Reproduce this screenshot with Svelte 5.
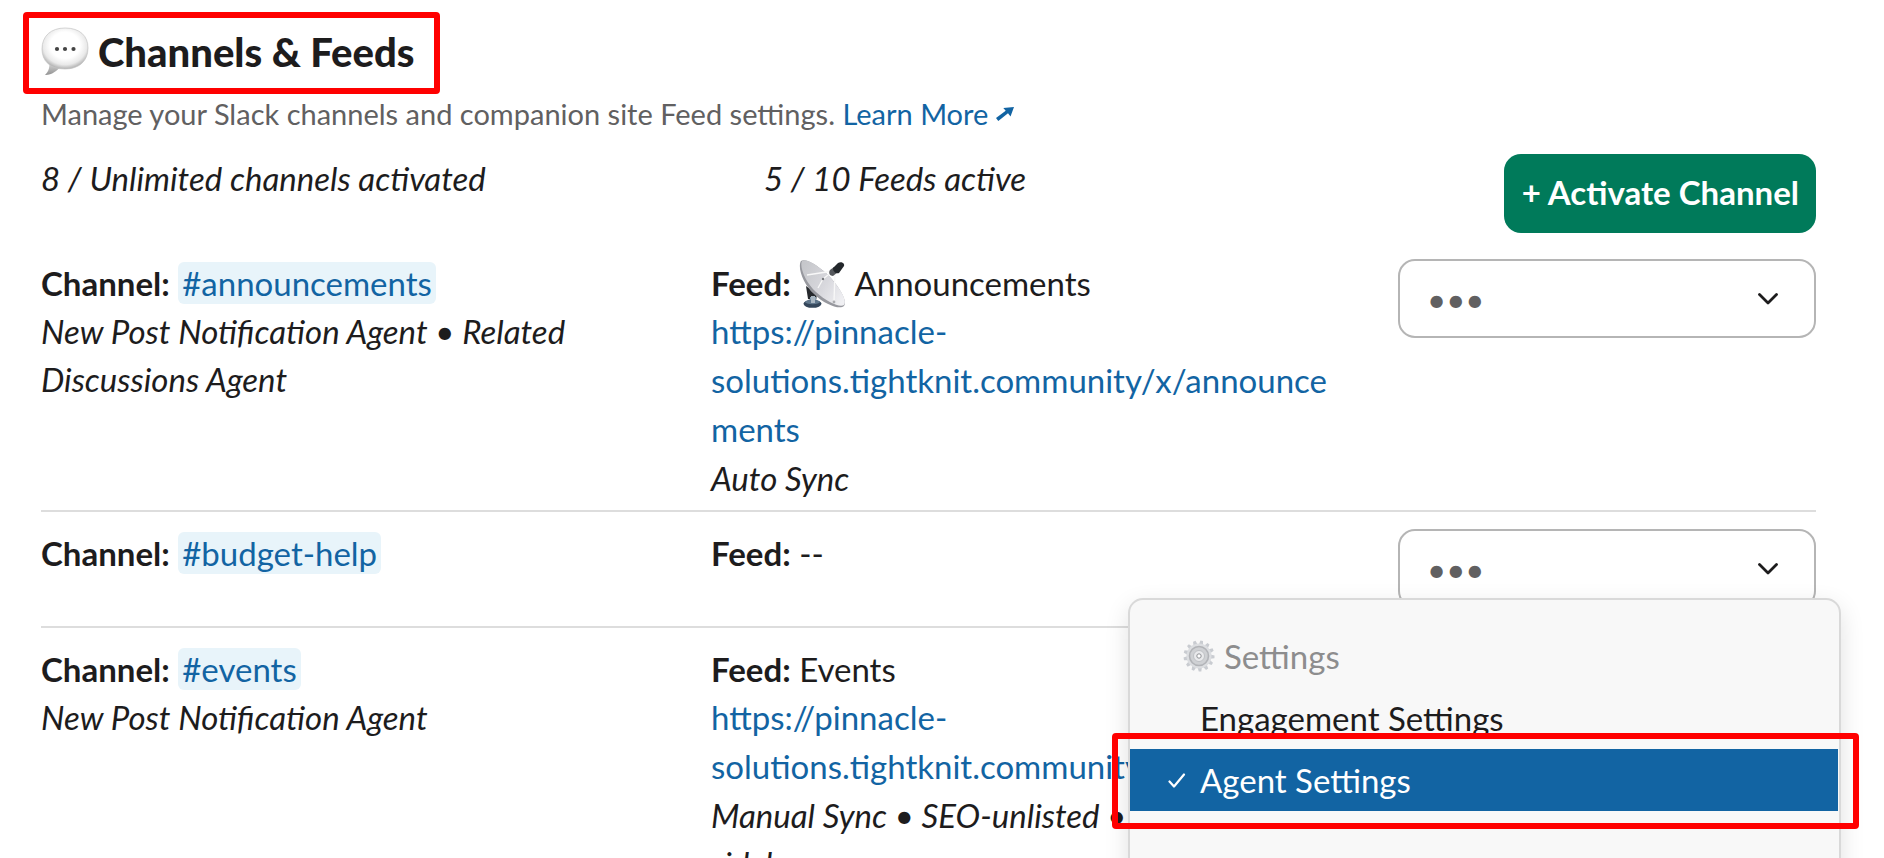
<script>
  const siteUrl = "https://pinnacle-solutions.tightknit.community";

  const channels = [
    {
      id: "announcements",
      agents: "New Post Notification Agent • Related Discussions Agent",
      feed: "Announcements",
      icon: true,
      url: `${siteUrl}/x/announcements`,
      sync: "Auto Sync",
    },
    { id: "budget-help", feed: "--" },
    {
      id: "events",
      agents: "New Post Notification Agent",
      feed: "Events",
      url: `${siteUrl}/events`,
      sync: "Manual Sync • SEO-unlisted •\nsidebar",
    },
  ];

  let openMenu = $state("budget-help");
  let selected = $state("Agent Settings");
  const menuItems = ["Engagement Settings", "Agent Settings"];

  function pick(item) {
    selected = item;
  }

  function handleKeydown(event) {
    if (event.key === "Escape") {
      openMenu = "";
    }
  }
</script>

<svelte:window onkeydown={handleKeydown} />

<main class="page">
  <h1 class="title">
    <svg class="title-icon" viewBox="0 0 48 50" aria-hidden="true">
      <defs>
        <radialGradient id="bubble" cx="50%" cy="42%" r="58%">
          <stop offset="0.55" stop-color="#fff" />
          <stop offset="0.82" stop-color="#e9e9e9" />
          <stop offset="1" stop-color="#b2b2b2" />
        </radialGradient>
        <linearGradient id="tail" x1="0" y1="0" x2="0" y2="1">
          <stop offset="0" stop-color="#e2e2e2" />
          <stop offset="1" stop-color="#929292" />
        </linearGradient>
      </defs>
      <path
        d="M8 34 C9 40 8 44 4 48 C10 48.500 16 44 20 39 L22 34 Z"
        fill="url(#tail)"
      />
      <path
        d="M24 1 C39 1 47 9 47 21 C47 34 38 42 24 42 C9 42 1 34 1 22 C1 9 10 1 24 1 Z"
        fill="url(#bubble)"
        stroke="#c4c4c4"
        stroke-width="0.7"
      />
      <circle cx="16" cy="22" r="2.100" fill="#444" />
      <circle cx="24" cy="22" r="2.100" fill="#444" />
      <circle cx="32.500" cy="22" r="2.100" fill="#444" />
    </svg>
    Channels &amp; Feeds
    <span class="callout callout-title"></span>
  </h1>

  <p class="subtitle">
    Manage your Slack channels and companion site Feed settings.
    <a href="#learn-more"
      >Learn More <svg class="arrow" viewBox="0 0 18 15" aria-hidden="true">
        <path
          d="M18 0 L14.500 9.500 L12 6.300 L2.300 14 L0 11 L9.700 3.700 L7.300 1 Z"
          fill="currentColor"
        />
      </svg></a
    >
  </p>

  <section class="row summary">
    <div class="fields">
      <em>8 / Unlimited channels activated</em>
      <em>5 / 10 Feeds active</em>
    </div>
    <button class="activate" type="button">+ Activate Channel</button>
  </section>

  {#each channels as channel (channel.id)}
    <section class="row channel">
      <div class="fields">
        <div>
          <div>
            <strong>Channel:</strong>
            <a class="pill" href="#{channel.id}">#{channel.id}</a>
          </div>
          {#if channel.agents}
            <em>{channel.agents}</em>
          {/if}
        </div>
        <div>
          <div>
            <strong>Feed:</strong>
            {#if channel.icon}
              <svg class="dish" viewBox="0 0 48 48" aria-hidden="true">
                <defs>
                  <linearGradient id="dish" x1="0" y1="0.2" x2="1" y2="0.8">
                    <stop offset="0" stop-color="#c6c7cb" />
                    <stop offset="0.55" stop-color="#d8d8dd" />
                    <stop offset="1" stop-color="#f0f0f3" />
                  </linearGradient>
                </defs>
                <path d="M7 26 L18 34 L17 41 L9 39 Z" fill="#25282c" />
                <path d="M11 37 H17 V44 H11 Z" fill="#8ba0b2" />
                <ellipse cx="13.500" cy="43.800" rx="9" ry="4" fill="#34465a" />
                <ellipse cx="13.500" cy="42" rx="7.500" ry="2.200" fill="#5f768b" />
                <path d="M12 36 H16 V43 H12 Z" fill="#a9b6c1" />
                <path
                  d="M2 1 C-2 8 5 25 15 34 C26 45 41 50 45 46 C49 41 40 26 28 14 C17 4 6 -2 2 1 Z"
                  fill="#97989e"
                />
                <path
                  d="M3 1 C0 7 7 23 17 32 C28 42 41 48 45 45 C49 40 39 25 28 14 C17 4 7 -2 3 1 Z"
                  fill="url(#dish)"
                />
                <path
                  d="M8 15 L34 11 M24 19 L34 11 M24 19 L19 28 M36 12 L35 42"
                  fill="none"
                  stroke="#f8f8f8"
                  stroke-width="1.300"
                />
                <circle cx="24" cy="19" r="1.200" fill="#77787c" />
                <circle cx="35" cy="42" r="1.400" fill="#aaabaf" />
                <path
                  d="M31 10 L35 7 L39 12 L34 16 C31 16 29 13 31 10 Z"
                  fill="#55585c"
                />
                <path
                  d="M34 8 L39 3 C42 1 46 3 45 6 L40 13 C37 14 34 12 34 8 Z"
                  fill="#23272b"
                />
              </svg>
            {/if}
            {channel.feed}
          </div>
          {#if channel.url}
            <a class="url" href={channel.url}>{channel.url}</a>
          {/if}
          {#if channel.sync}
            <em class="sync">{channel.sync}</em>
          {/if}
        </div>
      </div>

      <div class="actions">
        <select aria-label="Actions for #{channel.id}">
          <option>•••</option>
        </select>
        <svg class="chevron" viewBox="0 0 20 12" aria-hidden="true">
          <path
            d="M1.500 1.500 L10 10 L18.500 1.500"
            fill="none"
            stroke="currentColor"
            stroke-width="2.800"
            stroke-linecap="round"
            stroke-linejoin="round"
          />
        </svg>

        {#if openMenu === channel.id}
          <div class="menu" role="menu">
            <div class="menu-heading">
              <svg class="gear" viewBox="0 0 32 32" aria-hidden="true">
                {#each Array(13) as _, i}
                  <path
                    d="M13.800 5 L14.700 0.500 H17.300 L18.200 5 Z"
                    fill="#c9ccd1"
                    transform="rotate({(i * 360) / 13 + 10} 16 16)"
                  />
                {/each}
                <circle cx="16" cy="16" r="12.500" fill="#dcdee1" />
                <circle
                  cx="16"
                  cy="16"
                  r="9.500"
                  fill="#cfd1d4"
                  stroke="#b2b4b8"
                  stroke-width="1.600"
                />
                <circle cx="16" cy="16" r="5.500" fill="#e9eaec" stroke="#bfc1c5" />
                <circle cx="16" cy="16" r="2.200" fill="#fff" stroke="#8f9195" />
              </svg>
              Settings
            </div>
            {#each menuItems as item}
              <button
                class="menu-item"
                class:active={item === selected}
                type="button"
                role="menuitemradio"
                aria-checked={item === selected}
                onclick={() => pick(item)}
              >
                {#if item === selected}
                  <svg class="check" viewBox="0 0 18 16" aria-hidden="true">
                    <path
                      d="M1.500 8.500 L6 13.500 L16 1.500"
                      fill="none"
                      stroke="currentColor"
                      stroke-width="2.200"
                      stroke-linecap="round"
                      stroke-linejoin="round"
                    />
                  </svg>
                  <span class="callout"></span>
                {/if}
                {item}
              </button>
            {/each}
          </div>
        {/if}
      </div>
    </section>
  {/each}
</main>

<style>
  :global(body) {
    margin: 0;
    background: #fff;
  }

  .page {
    box-sizing: border-box;
    height: 100vh;
    overflow: hidden;
    padding: 28px 68px 0 41px;
    font-family: Lato, "Liberation Sans", sans-serif;
    font-size: 33px;
    line-height: 48px;
    color: #1d1c1d;
  }

  a {
    color: #1264a3;
    text-decoration: none;
  }

  a:hover {
    text-decoration: underline;
  }

  button,
  select {
    font: inherit;
    cursor: pointer;
  }

  .title {
    position: relative;
    display: flex;
    align-items: center;
    gap: 9px;
    width: fit-content;
    height: 48px;
    margin: 0;
    font-size: 40px;
    font-weight: 900;
  }

  .title-icon {
    width: 48px;
    height: 50px;
  }

  /* red highlight frame */
  .callout {
    position: absolute;
    inset: -16px -21px -18px -18px;
    border: 6px solid #f00;
    border-radius: 4px;
    pointer-events: none;
  }

  .callout-title {
    right: -25px;
  }

  .subtitle {
    margin: 20px 0 22px;
    font-size: 29px;
    line-height: 36px;
    color: #616061;
  }

  .arrow {
    width: 18px;
    height: 15px;
    vertical-align: 3px;
  }

  .row {
    display: flex;
    align-items: flex-start;
    gap: 52px;
  }

  .summary {
    margin-bottom: 9px;
  }

  .channel {
    padding: 17px 0 8px;
  }

  .channel + .channel {
    border-top: 2px solid #ddd;
  }

  .fields {
    flex: 1;
    min-width: 0;
    display: grid;
    grid-template-columns: 1fr 1fr;
    gap: 35px;
  }

  .fields > * {
    min-width: 0;
  }

  .activate {
    height: 79px;
    padding: 0 17px 3px 18px;
    border: none;
    border-radius: 17px;
    background: #007a5a;
    color: #fff;
    font-weight: 700;
  }

  .activate:hover {
    background: #148567;
  }

  .pill {
    padding: 1px 4px;
    border-radius: 6px;
    background: #e8f4fa;
  }

  .dish {
    width: 48px;
    height: 48px;
    margin: -8px 0;
    vertical-align: -4px;
  }

  .url {
    display: block;
    line-height: 49px;
    overflow-wrap: anywhere;
  }

  .sync {
    white-space: pre-line;
  }

  .actions {
    position: relative;
    width: 418px;
    margin-bottom: 10px;
  }

  select {
    display: block;
    width: 100%;
    height: 79px;
    padding: 0 27px;
    border: 2px solid #b5b5b5;
    border-radius: 17px;
    background: #fff;
    color: #616061;
    appearance: none;
  }

  .chevron {
    position: absolute;
    top: 34px;
    right: 38px;
    width: 20px;
    height: 12px;
    pointer-events: none;
  }

  .menu {
    position: absolute;
    z-index: 10;
    top: 69px;
    right: -25px;
    box-sizing: border-box;
    width: 713px;
    height: 600px;
    padding: 25px 1px 0 0;
    border: 2px solid #d9d9d9;
    border-radius: 15px;
    background: #f8f8f8;
    box-shadow: 0 8px 24px rgba(0, 0, 0, 0.12);
  }

  .menu-heading {
    display: flex;
    align-items: center;
    gap: 9px;
    height: 62px;
    padding-left: 53px;
    color: #8d8d8e;
  }

  .gear {
    width: 32px;
    height: 32px;
  }

  .menu-item {
    position: relative;
    display: block;
    width: 100%;
    height: 62px;
    padding: 0 0 0 70px;
    border: none;
    background: none;
    color: #1d1c1d;
    text-align: left;
  }

  .menu-item.active {
    background: #1264a3;
    color: #fff;
  }

  .check {
    position: absolute;
    top: 24px;
    left: 38px;
    width: 18px;
    height: 16px;
  }
</style>
